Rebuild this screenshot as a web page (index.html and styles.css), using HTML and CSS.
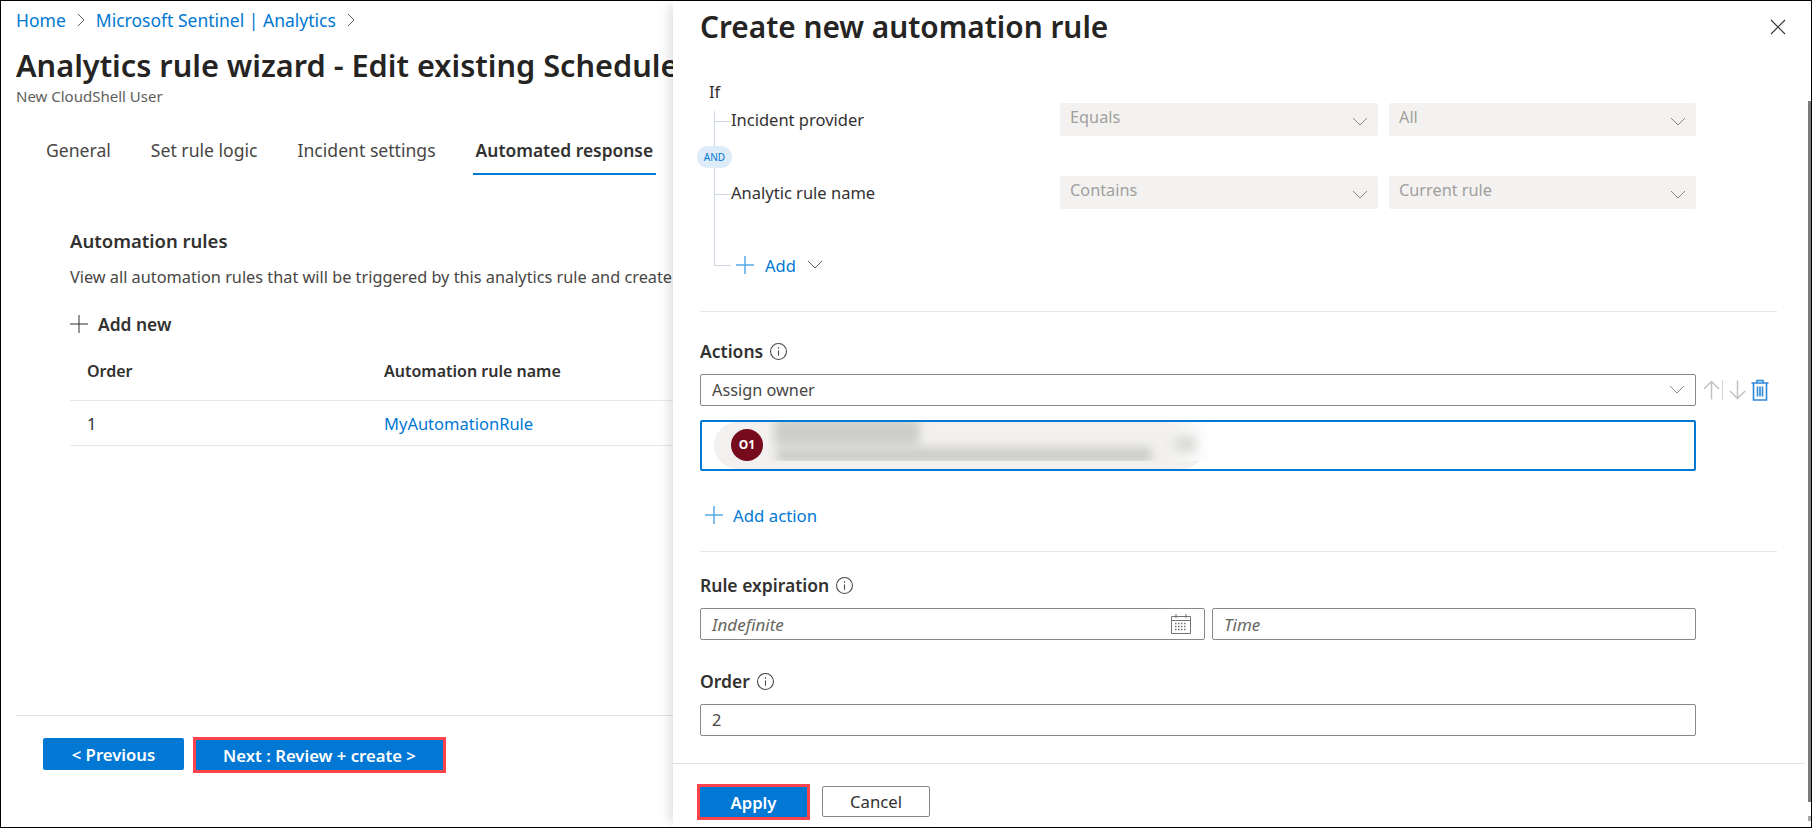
FILE: index.html
```html
<!DOCTYPE html>
<html lang="en">
<head>
  <meta charset="UTF-8" />
  <title>Analytics rule wizard</title>
  <link rel="stylesheet" href="styles.css">
</head>
<body>
  <div class="page">
    <!-- wizard behind the panel -->
    <main class="wizard">
      <nav class="crumbs">
        <a>Home</a>
        <svg class="crumb-sep" viewBox="0 0 10 16"><path d="M2 2l6 6-6 6" /></svg>
        <a>Microsoft Sentinel | Analytics</a>
        <svg class="crumb-sep" viewBox="0 0 10 16"><path d="M2 2l6 6-6 6" /></svg>
      </nav>
      <h1 class="wizard-title">Analytics rule wizard - Edit existing Scheduled query rule</h1>
      <div class="wizard-sub">New CloudShell User</div>

      <div class="tabs">
        <span class="tab">General</span>
        <span class="tab">Set rule logic</span>
        <span class="tab">Incident settings</span>
        <span class="tab active">Automated response</span>
      </div>

      <section class="rules">
        <h3 class="rules-title">Automation rules</h3>
        <p class="rules-desc">View all automation rules that will be triggered by this analytics rule and create new ones</p>
        <div class="add-new">
          <svg class="plus" viewBox="0 0 18 18"><path d="M9 0v18M0 9h18" /></svg>
          <span>Add new</span>
        </div>
        <div class="rule-row rule-head">
          <span class="col-order">Order</span>
          <span>Automation rule name</span>
        </div>
        <div class="rule-row rule-item">
          <span class="col-order">1</span>
          <a>MyAutomationRule</a>
        </div>
      </section>

      <footer class="wizard-foot">
        <button class="btn primary prev">&lt; Previous</button>
        <span class="marked next-mark"><button class="btn primary next">Next : Review + create &gt;</button></span>
      </footer>
    </main>

    <!-- side panel -->
    <aside class="panel">
      <header class="panel-head">
        <h2>Create new automation rule</h2>
        <svg class="close" viewBox="0 0 16 16"><path d="M1 1l14 14M15 1L1 15" /></svg>
      </header>

      <div class="panel-body">
        <div class="if-label">If</div>
        <div class="conditions">
          <div class="cond">
            <span class="cond-name">Incident provider</span>
            <div class="fake-select disabled first"><span>Equals</span><svg class="chev" viewBox="0 0 16 10"><path d="M1 1l7 7 7-7" /></svg></div>
            <div class="fake-select disabled second"><span>All</span><svg class="chev" viewBox="0 0 16 10"><path d="M1 1l7 7 7-7" /></svg></div>
          </div>
          <span class="and-pill">AND</span>
          <div class="cond">
            <span class="cond-name">Analytic rule name</span>
            <div class="fake-select disabled first"><span>Contains</span><svg class="chev" viewBox="0 0 16 10"><path d="M1 1l7 7 7-7" /></svg></div>
            <div class="fake-select disabled second"><span>Current rule</span><svg class="chev" viewBox="0 0 16 10"><path d="M1 1l7 7 7-7" /></svg></div>
          </div>
          <div class="cond-add">
            <svg class="plus blue" viewBox="0 0 18 18"><path d="M9 0v18M0 9h18" /></svg>
            <span class="link">Add</span>
            <svg class="chev dark" viewBox="0 0 16 10"><path d="M1 1l7 7 7-7" /></svg>
          </div>
        </div>

        <hr class="rule" />

        <div class="field-label actions-label">Actions
          <svg class="info" viewBox="0 0 16 16"><circle cx="8" cy="8" r="7.500" /><path d="M8 7v5M8 4v1.500" /></svg>
        </div>
        <div class="action-line">
          <div class="fake-select wide"><span>Assign owner</span><svg class="chev" viewBox="0 0 16 10"><path d="M1 1l7 7 7-7" /></svg></div>
          <div class="action-tools">
            <svg class="arrow" viewBox="0 0 18 20"><path d="M9 20V1M1 9l8-8 8 8" /></svg>
            <span class="tool-sep"></span>
            <svg class="arrow" viewBox="0 0 18 20"><path d="M9 0v19M1 11l8 8 8-8" /></svg>
            <svg class="trash" viewBox="0 0 18 22"><path d="M0.500 4h17M6 4V1.500h6V4M2.500 4v17h13V4M6.500 7.500v10M9 7.500v10M11.500 7.500v10" /></svg>
          </div>
        </div>
        <div class="picker">
          <div class="chip"></div>
          <div class="smudge">
            <i class="blob b1"></i><i class="blob b2"></i><i class="blob b3"></i>
          </div>
          <span class="avatar">O1</span>
        </div>
        <div class="add-action">
          <svg class="plus blue" viewBox="0 0 18 18"><path d="M9 0v18M0 9h18" /></svg>
          <span class="link">Add action</span>
        </div>

        <hr class="rule second-rule" />

        <div class="field-label">Rule expiration
          <svg class="info" viewBox="0 0 16 16"><circle cx="8" cy="8" r="7.500" /><path d="M8 7v5M8 4v1.500" /></svg>
        </div>
        <div class="date-line">
          <div class="text-box date"><em>Indefinite</em>
            <svg class="calendar" viewBox="0 0 22 22">
              <path class="cal-frame" d="M1.500 3.500h19v17h-19zM1.500 7.500h19M6 1v4M16 1v4" />
              <path class="cal-dots" d="M5 10.500h12M5 13.500h12M5 16.500h12" />
            </svg>
          </div>
          <div class="text-box time"><em>Time</em></div>
        </div>

        <div class="field-label order-label">Order
          <svg class="info" viewBox="0 0 16 16"><circle cx="8" cy="8" r="7.500" /><path d="M8 7v5M8 4v1.500" /></svg>
        </div>
        <div class="text-box order">2</div>
      </div>

      <footer class="panel-foot">
        <span class="marked"><button class="btn primary apply">Apply</button></span>
        <button class="btn cancel">Cancel</button>
      </footer>

      <!-- thin scroll thumb on the panel edge -->
      <span class="scroll-thumb"></span>
      <span class="scroll-end"></span>
    </aside>
  </div>
</body>
</html>
```

FILE: styles.css
```css
* {
  box-sizing: border-box;
}

html, body {
  margin: 0;
  height: 100%;
  overflow: hidden;
}

body {
  font-family: 'Noto Sans', 'Open Sans', sans-serif;
  font-size: 16px;
  color: #323130;
  background-color: #fff;
}

svg {
  fill: none;
  stroke: currentColor;
  flex: none;
}

a, .link {
  color: #0078d4;
}

.page {
  display: flex;
  width: 1812px;
  height: 828px;
  border: 1px solid #000;
}

/* left side */
.wizard {
  width: 672px;
  flex: none;
  display: flex;
  flex-direction: column;
  overflow: hidden;
  padding-left: 15px;
}

.crumbs {
  display: flex;
  align-items: center;
  height: 22px;
  margin-top: 8px;
  font-size: 17.500px;
}

.crumb-sep {
  width: 10px;
  height: 16px;
  margin: 0 10px;
  color: #605e5c;
  stroke-width: 1;
}

.wizard-title {
  margin: 15px 0 0;
  font-size: 30.700px;
  line-height: 38px;
  font-weight: 600;
  white-space: nowrap;
  overflow: hidden;
  color: #252423;
}

.wizard-sub {
  font-size: 15px;
  line-height: 18px;
  margin-top: 3px;
  color: #605e5c;
}

.tabs {
  display: flex;
  gap: 40px;
  margin: 33px 0 0 30px;
  font-size: 17.600px;
  line-height: 24px;
  color: #484644;
}

.tab {
  position: relative;
}

.tab.active {
  font-size: 17.400px;
  font-weight: 600;
  color: #323130;
}

.tab.active::after {
  content: '';
  position: absolute;
  left: -3px;
  right: -3px;
  bottom: -13px;
  height: 2px;
  background-color: #0078d4;
}

.rules {
  margin: 67px 0 0 54px;
  flex: 1;
}

.rules-title {
  margin: 0;
  font-size: 18.500px;
  line-height: 24px;
  font-weight: 600;
}

.rules-desc {
  margin: 13px 0 0;
  font-size: 16.300px;
  line-height: 22px;
  white-space: nowrap;
  overflow: hidden;
  color: #484644;
}

.add-new {
  display: flex;
  align-items: center;
  gap: 10px;
  margin-top: 24px;
  height: 24px;
  font-size: 17.400px;
  font-weight: 600;
}

.plus {
  width: 18px;
  height: 18px;
  stroke-width: 1;
  color: #323130;
}

.plus.blue {
  color: #5aa9e6;
  stroke-width: 1.500;
}

.rule-row {
  display: flex;
  align-items: center;
  border-bottom: 1px solid #e8e8e8;
  font-size: 16px;
}

.rule-head {
  height: 65px;
  padding-top: 5px;
  font-weight: 600;
}

.rule-item {
  height: 45px;
  font-size: 16.500px;
}

.col-order {
  width: 314px;
  padding-left: 17px;
}

.wizard-foot {
  display: flex;
  align-items: flex-start;
  gap: 9px;
  height: 112px;
  padding: 22px 0 0 27px;
  border-top: 1px solid #e1e1e1;
}

.btn {
  font: inherit;
  font-size: 16.700px;
  font-weight: 600;
  border: none;
  border-radius: 2px;
  padding: 0;
}

.primary {
  background-color: #0078d4;
  color: #fff;
}

.prev {
  width: 141px;
  height: 32px;
}

.marked {
  display: inline-flex;
  border: 3px solid #ff434b;
}

.next-mark {
  margin-top: -1px;
}

.next {
  width: 247px;
  height: 30px;
  border-radius: 0;
}

/* panel */
.panel {
  width: 1138px;
  flex: none;
  display: flex;
  flex-direction: column;
  box-shadow: -8px 0 10px -4px rgba(0, 0, 0, 0.12);
  background-color: #fff;
  position: relative;
}

.panel-head {
  display: flex;
  justify-content: space-between;
  align-items: center;
  height: 52px;
  padding: 0 25px 0 27px;
}

.panel-head h2 {
  margin: 0;
  font-size: 29.800px;
  line-height: 36px;
  font-weight: 600;
  color: #252423;
}

.close {
  width: 16px;
  height: 16px;
  color: #323130;
  stroke-width: 1.100;
}

.panel-body {
  flex: 1;
  padding: 0 32px 0 27px;
}

.if-label {
  margin: 27px 0 0 9px;
  font-size: 16.500px;
  line-height: 24px;
}

.conditions {
  position: relative;
  width: 996px;
  margin-top: -1px;
  height: 171px;
}

.conditions::before {
  content: '';
  position: absolute;
  left: 14px;
  top: 8px;
  bottom: 9px;
  border-left: 1px solid #ced9e4;
}

.cond {
  display: flex;
  align-items: center;
  gap: 11px;
  height: 33px;
  position: relative;
}

.cond + .and-pill + .cond {
  margin-top: 40px;
}

.cond::before {
  content: '';
  position: absolute;
  left: 14px;
  width: 17px;
  top: 18px;
  border-top: 1px solid #ced9e4;
}

.cond-name {
  width: 349px;
  padding-left: 31px;
  font-size: 16.500px;
}

.fake-select {
  display: flex;
  align-items: center;
  justify-content: space-between;
  height: 32px;
  padding: 0 10px;
  border-radius: 2px;
  font-size: 16.300px;
}

.fake-select.disabled {
  background-color: #f3f2f1;
  color: #a19f9d;
  height: 33px;
}

.fake-select.disabled span {
  margin-top: -5px;
}

.fake-select.first {
  width: 318px;
}

.fake-select.second {
  width: 307px;
}

.chev {
  width: 16px;
  height: 10px;
  color: #8a8886;
  stroke-width: 1;
}

.disabled .chev {
  margin-top: 4px;
}

.chev.dark {
  color: #605e5c;
}

.and-pill {
  position: absolute;
  left: -3px;
  top: 43px;
  width: 35px;
  height: 22px;
  border-radius: 11px;
  background-color: #deecf9;
  color: #0078d4;
  font-size: 10px;
  line-height: 22px;
  text-align: center;
}

.cond-add {
  position: absolute;
  left: 14px;
  top: 150px;
  display: flex;
  align-items: center;
  gap: 11px;
  padding-left: 22px;
  font-size: 16.500px;
  height: 24px;
}

.cond-add::before {
  content: '';
  position: absolute;
  left: 0;
  width: 17px;
  top: 12px;
  border-top: 1px solid #ced9e4;
}

.rule {
  height: 1px;
  margin: 37px 0 0;
  border: none;
  background-color: #e6e6e6;
  width: 1077px;
}

.field-label {
  display: flex;
  align-items: center;
  gap: 7px;
  font-size: 17.500px;
  font-weight: 600;
  line-height: 22px;
}

.actions-label {
  margin-top: 28px;
}

.info {
  width: 17px;
  height: 17px;
  color: #484644;
  stroke-width: 1;
}

.action-line {
  display: flex;
  align-items: center;
  margin-top: 12px;
}

.fake-select.wide {
  width: 996px;
  border: 1px solid #8a8886;
  color: #484644;
  padding: 0 10px 0 11px;
}

.action-tools {
  display: flex;
  align-items: center;
  margin-left: 7px;
}

.arrow {
  width: 17px;
  height: 20px;
  color: #c2c2c2;
  stroke-width: 1.600;
}

.tool-sep {
  width: 1px;
  height: 20px;
  margin: 0 6px 0 2px;
  background-color: #d4d4d4;
}

.trash {
  width: 18px;
  height: 22px;
  margin-left: 5px;
  color: #2b88d8;
  stroke-width: 1.600;
}

.picker {
  position: relative;
  width: 996px;
  height: 51px;
  margin-top: 14px;
  border: 2px solid #0078d4;
  border-radius: 2px;
}

.chip {
  position: absolute;
  left: 12px;
  top: 0;
  width: 491px;
  height: 47px;
  border-radius: 24px;
  background-color: #f2f1ef;
}

/* the name in the chip is blurred out in the reference */
.smudge {
  position: absolute;
  left: 66px;
  top: 0;
  width: 444px;
  height: 39px;
  background: linear-gradient(to right, #f2f1ef 90%, #fff 100%);
  overflow: hidden;
}

.blob {
  position: absolute;
  background-color: #cdcdcb;
  filter: blur(5px);
  border-radius: 6px;
}

.b1 {
  left: 6px;
  top: -4px;
  width: 146px;
  height: 28px;
}

.b2 {
  left: 8px;
  top: 25px;
  width: 376px;
  height: 16px;
}

.b3 {
  left: 406px;
  top: 13px;
  width: 22px;
  height: 18px;
  background-color: #dcdcda;
}

.avatar {
  position: absolute;
  left: 29px;
  top: 7px;
  width: 32px;
  height: 32px;
  border-radius: 50%;
  background-color: #750b1c;
  color: #fff;
  font-size: 12px;
  font-weight: 700;
  line-height: 32px;
  text-align: center;
}

.add-action {
  display: flex;
  align-items: center;
  gap: 10px;
  margin: 32px 0 0 5px;
  height: 24px;
  font-size: 16.800px;
}

.second-rule {
  margin-top: 24px;
}

.second-rule + .field-label {
  margin-top: 22px;
}

.date-line {
  display: flex;
  gap: 7px;
  margin-top: 12px;
  width: 996px;
}

.text-box {
  display: flex;
  align-items: center;
  justify-content: space-between;
  height: 32px;
  padding: 0 10px 0 11px;
  border: 1px solid #8a8886;
  border-radius: 2px;
  font-size: 16.300px;
  color: #484644;
}

.text-box em {
  font-size: 17px;
  color: #69675f;
}

.date {
  width: 505px;
  padding-right: 12px;
}

.time {
  flex: 1;
}

.calendar {
  width: 22px;
  height: 22px;
  color: #767472;
}

.cal-frame {
  stroke-width: 1;
}

.cal-dots {
  stroke-width: 1.500;
  stroke-dasharray: 1.500 1.500;
}

.order-label {
  margin-top: 30px;
}

.order {
  width: 996px;
  margin-top: 12px;
}

.panel-foot {
  display: flex;
  align-items: flex-start;
  gap: 12px;
  height: 64px;
  padding: 20px 0 0 24px;
  border-top: 1px solid #e1e1e1;
  margin-right: 6px;
}

.apply {
  width: 107px;
  height: 30px;
  border-radius: 0;
}

.cancel {
  width: 108px;
  height: 31px;
  margin-top: 2px;
  background-color: #fff;
  border: 1px solid #8a8886;
  color: #323130;
  font-weight: 400;
}

.scroll-thumb {
  position: absolute;
  right: 0;
  top: 100px;
  height: 701px;
  width: 3px;
  background-color: #7c7c7c;
}

.scroll-end {
  position: absolute;
  right: 0;
  top: 815px;
  width: 3px;
  height: 5px;
  background-color: #aaa;
}
```
